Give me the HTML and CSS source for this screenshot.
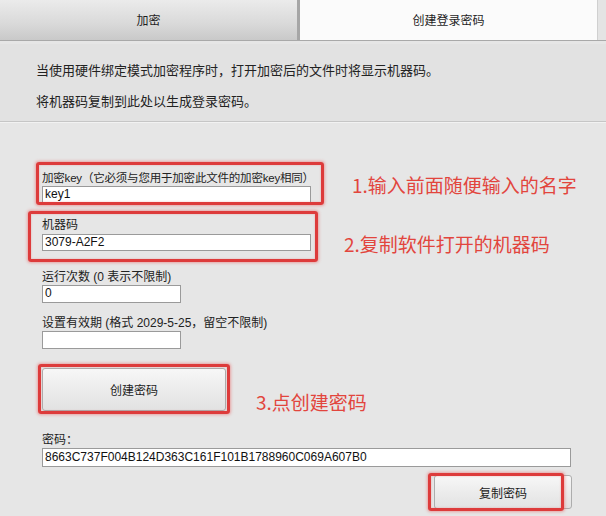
FILE: index.html
```html
<!DOCTYPE html>
<html lang="zh">
<head>
<meta charset="utf-8">
<link rel="stylesheet" href="styles.css">
</head>
<body>
<div class="tabs">
  <div class="tab tab-off">加密</div>
  <div class="tab tab-on">创建登录密码</div>
</div>
<div class="desc">
  <p class="line">当使用硬件绑定模式加密程序时，打开加密后的文件时将显示机器码。</p>
  <p class="line">将机器码复制到此处以生成登录密码。</p>
</div>
<div class="form">
  <div class="row row1">
    <div class="field">
      <div class="label label-long">加密key（它必须与您用于加密此文件的加密key相同）</div>
      <div class="input wide">key1</div>
      <div class="hl hl1"></div>
    </div>
    <div class="note note1">1.输入前面随便输入的名字</div>
  </div>
  <div class="row row2">
    <div class="field">
      <div class="label">机器码</div>
      <div class="input wide">3079-A2F2</div>
      <div class="hl hl2"></div>
    </div>
    <div class="note note2">2.复制软件打开的机器码</div>
  </div>
  <div class="field row3">
    <div class="label">运行次数 (0 表示不限制)</div>
    <div class="input short">0</div>
  </div>
  <div class="field row4">
    <div class="label">设置有效期 (格式 2029-5-25，留空不限制)</div>
    <div class="input short"></div>
  </div>
  <div class="row row5">
    <div class="field">
      <div class="btn btn-create">创建密码</div>
      <div class="hl hl3"></div>
    </div>
    <div class="note note3">3.点创建密码</div>
  </div>
  <div class="field row6">
    <div class="label">密码：</div>
    <div class="input full">8663C737F004B124D363C161F101B1788960C069A607B0</div>
  </div>
  <div class="copyrow">
    <div class="field">
      <div class="btn btn-copy">复制密码</div>
      <div class="hl hl4"></div>
    </div>
  </div>
</div>
</body>
</html>
```
FILE: styles.css
```css
* { box-sizing: border-box; }
html, body { margin: 0; padding: 0; }
body {
  width: 606px;
  height: 516px;
  overflow: hidden;
  background: #e6e6e6;
  font-family: "Liberation Sans", "Noto Sans CJK SC", sans-serif;
  color: #1e1e1e;
}
.tabs {
  display: flex;
  height: 41px;
  border-bottom: 1px solid #a9a9a9;
  background: #e4e4e4;
}
.tab {
  display: flex;
  align-items: center;
  justify-content: center;
  font-size: 12px;
  padding-bottom: 2px;
}
.tab-off {
  width: 300px;
  background: linear-gradient(#ebebeb, #d9d9d9 60%, #c9c9c9);
  border-right: 3px solid #a6a6a6;
}
.tab-on {
  width: 298px;
  background: #fbfbfb;
  border-right: 1px solid #d0d0d0;
}
.desc {
  margin-top: 3px;
  height: 78px;
  padding: 11px 0 0 36px;
  background: #e2e2e2;
  border-bottom: 1px solid #c6c6c6;
}
.line {
  margin: 0;
  font-size: 13px;
  line-height: 31px;
  color: #222;
}
.form {
  border-top: 1px solid #f2f2f2;
  padding-left: 42px;
}
.row {
  display: flex;
  align-items: flex-start;
}
.field {
  position: relative;
}
.label {
  font-size: 12px;
  line-height: 15px;
  height: 15px;
  white-space: nowrap;
  color: #222;
}
.label-long {
  font-size: 11.5px;
  letter-spacing: -0.2px;
}
.input {
  height: 17px;
  background: #fff;
  border: 1px solid #9a9a9a;
  font-size: 12px;
  line-height: 15px;
  padding-left: 2px;
  color: #111;
  white-space: nowrap;
}
.wide { width: 269px; }
.short { width: 139px; }
.full { width: 529px; height: 19px; line-height: 17px; }
.row1 { margin-top: 48px; }
.row2 { margin-top: 15px; }
.row2 .input { margin-top: 1px; }
.row3 { margin-top: 19px; }
.row3 .input { height: 18px; }
.row4 { margin-top: 13px; }
.row4 .input { height: 18px; }
.row5 { margin-top: 19px; }
.row6 { margin-top: 22px; }
.note {
  color: #e2453d;
  font-family: "Noto Sans CJK SC", sans-serif;
  font-size: 19px;
  line-height: 24px;
  height: 24px;
  margin-bottom: -24px;
  white-space: nowrap;
}
.note1 { margin-top: 2px; margin-left: 38px; }
.note2 { margin-top: 14px; margin-left: 33px; }
.note3 { margin-top: 22px; margin-left: 30px; }
.btn {
  display: flex;
  align-items: center;
  justify-content: center;
  font-size: 12px;
  background: linear-gradient(#f7f7f7, #ececec 50%, #e2e2e2);
  border: 1px solid #adadad;
  border-radius: 3px;
  color: #222;
}
.btn-create { width: 184px; height: 43px; }
.copyrow {
  display: flex;
  justify-content: flex-end;
  padding-right: 34px;
  margin-top: 8px;
}
.btn-copy { width: 138px; height: 34px; }
.hl {
  position: absolute;
  border: 3px solid #dd3b3b;
  border-radius: 3px;
  box-shadow: 0 0 3px 1px rgba(235, 80, 80, 0.45), inset 0 0 2px rgba(235, 80, 80, 0.4);
  pointer-events: none;
}
.hl1 { top: -9px; left: -6px; right: -10px; bottom: -2px; }
.hl2 { top: -7px; left: -14px; right: -7px; bottom: -11px; }
.hl3 { top: -4px; left: -4px; right: -4px; bottom: -3px; }
.hl4 { top: -2px; left: -6px; right: 8px; bottom: -2px; }
```
